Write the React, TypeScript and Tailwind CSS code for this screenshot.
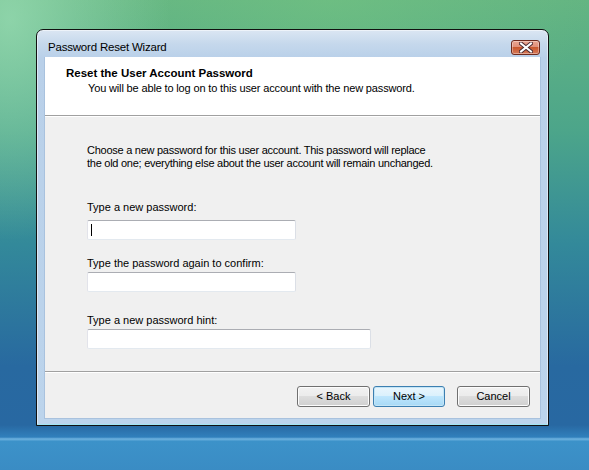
import React from "react";

const font = { fontFamily: '"Liberation Sans", Arial, sans-serif' };

function CloseButton() {
  return (
    <div className="absolute right-[8px] top-[10px] w-[29px] h-[15px] rounded-[3px] border border-[#6e2a1e] bg-[linear-gradient(to_bottom,#eba591_0%,#e0907a_45%,#c9582f_50%,#d67a5a_100%)] flex items-center justify-center shadow-[inset_0_0_0_1px_rgba(255,255,255,0.35)]">
      <svg width="14" height="11" viewBox="0 0 14 11">
        <path
          d="M2 1.5 L12 9.5 M12 1.5 L2 9.5"
          stroke="#4a2a30"
          strokeWidth="4"
          strokeLinecap="square"
        />
        <path
          d="M2 1.5 L12 9.5 M12 1.5 L2 9.5"
          stroke="#ffffff"
          strokeWidth="2"
          strokeLinecap="square"
        />
      </svg>
    </div>
  );
}

function Field({
  label,
  width,
  gap,
  cursor,
}: {
  label: string;
  width: string;
  gap: string;
  cursor?: boolean;
}) {
  return (
    <div className="flex flex-col">
      <span className="text-[11px] leading-[13px] text-black">{label}</span>
      <div
        className={`relative ${gap} h-[20px] ${width} rounded-[2px] bg-white border border-t-[#abadb3] border-l-[#e2e3ea] border-r-[#dbdfe6] border-b-[#e3e9ef]`}
      >
        {cursor && <div className="absolute left-[3px] top-[3px] w-px h-[12px] bg-black" />}
      </div>
    </div>
  );
}

function Button({ children, primary, className }: { children: React.ReactNode; primary?: boolean; className?: string }) {
  return primary ? (
    <button className={`w-[72px] h-[21px] rounded-[3px] border border-[#3c7fb1] bg-[linear-gradient(to_bottom,#eaf6fd_0%,#d9f0fc_50%,#bee6fd_50%,#a7d9f5_100%)] shadow-[inset_0_0_0_1px_#c4e5f6] text-[11px] text-black ${className ?? ""}`}>
      {children}
    </button>
  ) : (
    <button className={`w-[73px] h-[21px] rounded-[3px] border border-[#707070] bg-[linear-gradient(to_bottom,#f2f2f2_0%,#ebebeb_50%,#dddddd_50%,#cfcfcf_100%)] shadow-[inset_0_0_0_1px_#fcfcfc] text-[11px] text-black ${className ?? ""}`}>
      {children}
    </button>
  );
}

export default function App() {
  return (
    <div
      style={font}
      className="relative w-[589px] h-[470px] overflow-hidden bg-[radial-gradient(ellipse_160px_220px_at_10px_20px,rgba(160,225,185,0.7),transparent),radial-gradient(ellipse_260px_160px_at_330px_0px,rgba(120,200,130,0.45),transparent),linear-gradient(to_bottom,#64b582_0%,#4ca58a_28%,#33899a_52%,#2869a0_78%,#2868a2_90.4%,#3080bc_93%,#70b4e0_93.4%,#3c92c9_93.9%,#3a8cc4_100%)]"
    >
      {/* window */}
      <div className="absolute left-[36px] top-[29px] w-[513px] h-[397px] rounded-t-[7px] border border-[#111] bg-[linear-gradient(to_bottom,#dbe6f3_0px,#c5d8ec_14px,#b9d0e9_28px,#bcd4ec_100%)] flex flex-col shadow-[inset_0_0_0_1px_rgba(255,255,255,0.5),inset_0_-1px_0_#45c8e6]">
        <div className="relative h-[27px] shrink-0 flex items-start pt-[11px] pl-[11px] text-[11.5px] leading-[13px] tracking-[-0.2px] text-black">
          <span>Password Reset Wizard</span>
          <CloseButton />
        </div>
        <div className="flex-1 mx-[7px] mb-[6px] bg-[#f0f0f0] flex flex-col border border-[#a9c2de] border-t-0">
          {/* header */}
          <div className="h-[59px] shrink-0 bg-white pl-[21px] pt-[9px] border-b border-[#a0a0a0]">
            <div className="text-[11.5px] leading-[14px] font-bold text-black">Reset the User Account Password</div>
            <div className="pl-[22px] mt-[1px] text-[11px] leading-[14px] tracking-[-0.15px] text-black">
              You will be able to log on to this user account with the new password.
            </div>
          </div>
          {/* body */}
          <div className="flex-1 border-t border-white pl-[42px] pt-[27px] flex flex-col">
            <p className="text-[11px] leading-[13px] text-black tracking-[-0.26px]">
              Choose a new password for this user account. This password will replace
              <br />
              the old one; everything else about the user account will remain unchanged.
            </p>
            <div className="mt-[31px] flex flex-col">
              <Field label="Type a new password:" width="w-[209px]" gap="mt-[6px]" cursor />
              <div className="mt-[17px]">
                <Field label="Type the password again to confirm:" width="w-[209px]" gap="mt-[2px]" />
              </div>
              <div className="mt-[22px]">
                <Field label="Type a new password hint:" width="w-[284px]" gap="mt-[2px]" />
              </div>
            </div>
          </div>
          {/* footer */}
          <div className="h-[47px] shrink-0 border-t border-[#a0a0a0] flex items-start justify-end pr-[10px] pt-[14px] shadow-[inset_0_1px_0_#ffffff]">
            <Button className="mr-[3px]">&lt; Back</Button>
            <Button primary className="mr-[12px]">Next &gt;</Button>
            <Button>Cancel</Button>
          </div>
        </div>
      </div>
    </div>
  );
}
